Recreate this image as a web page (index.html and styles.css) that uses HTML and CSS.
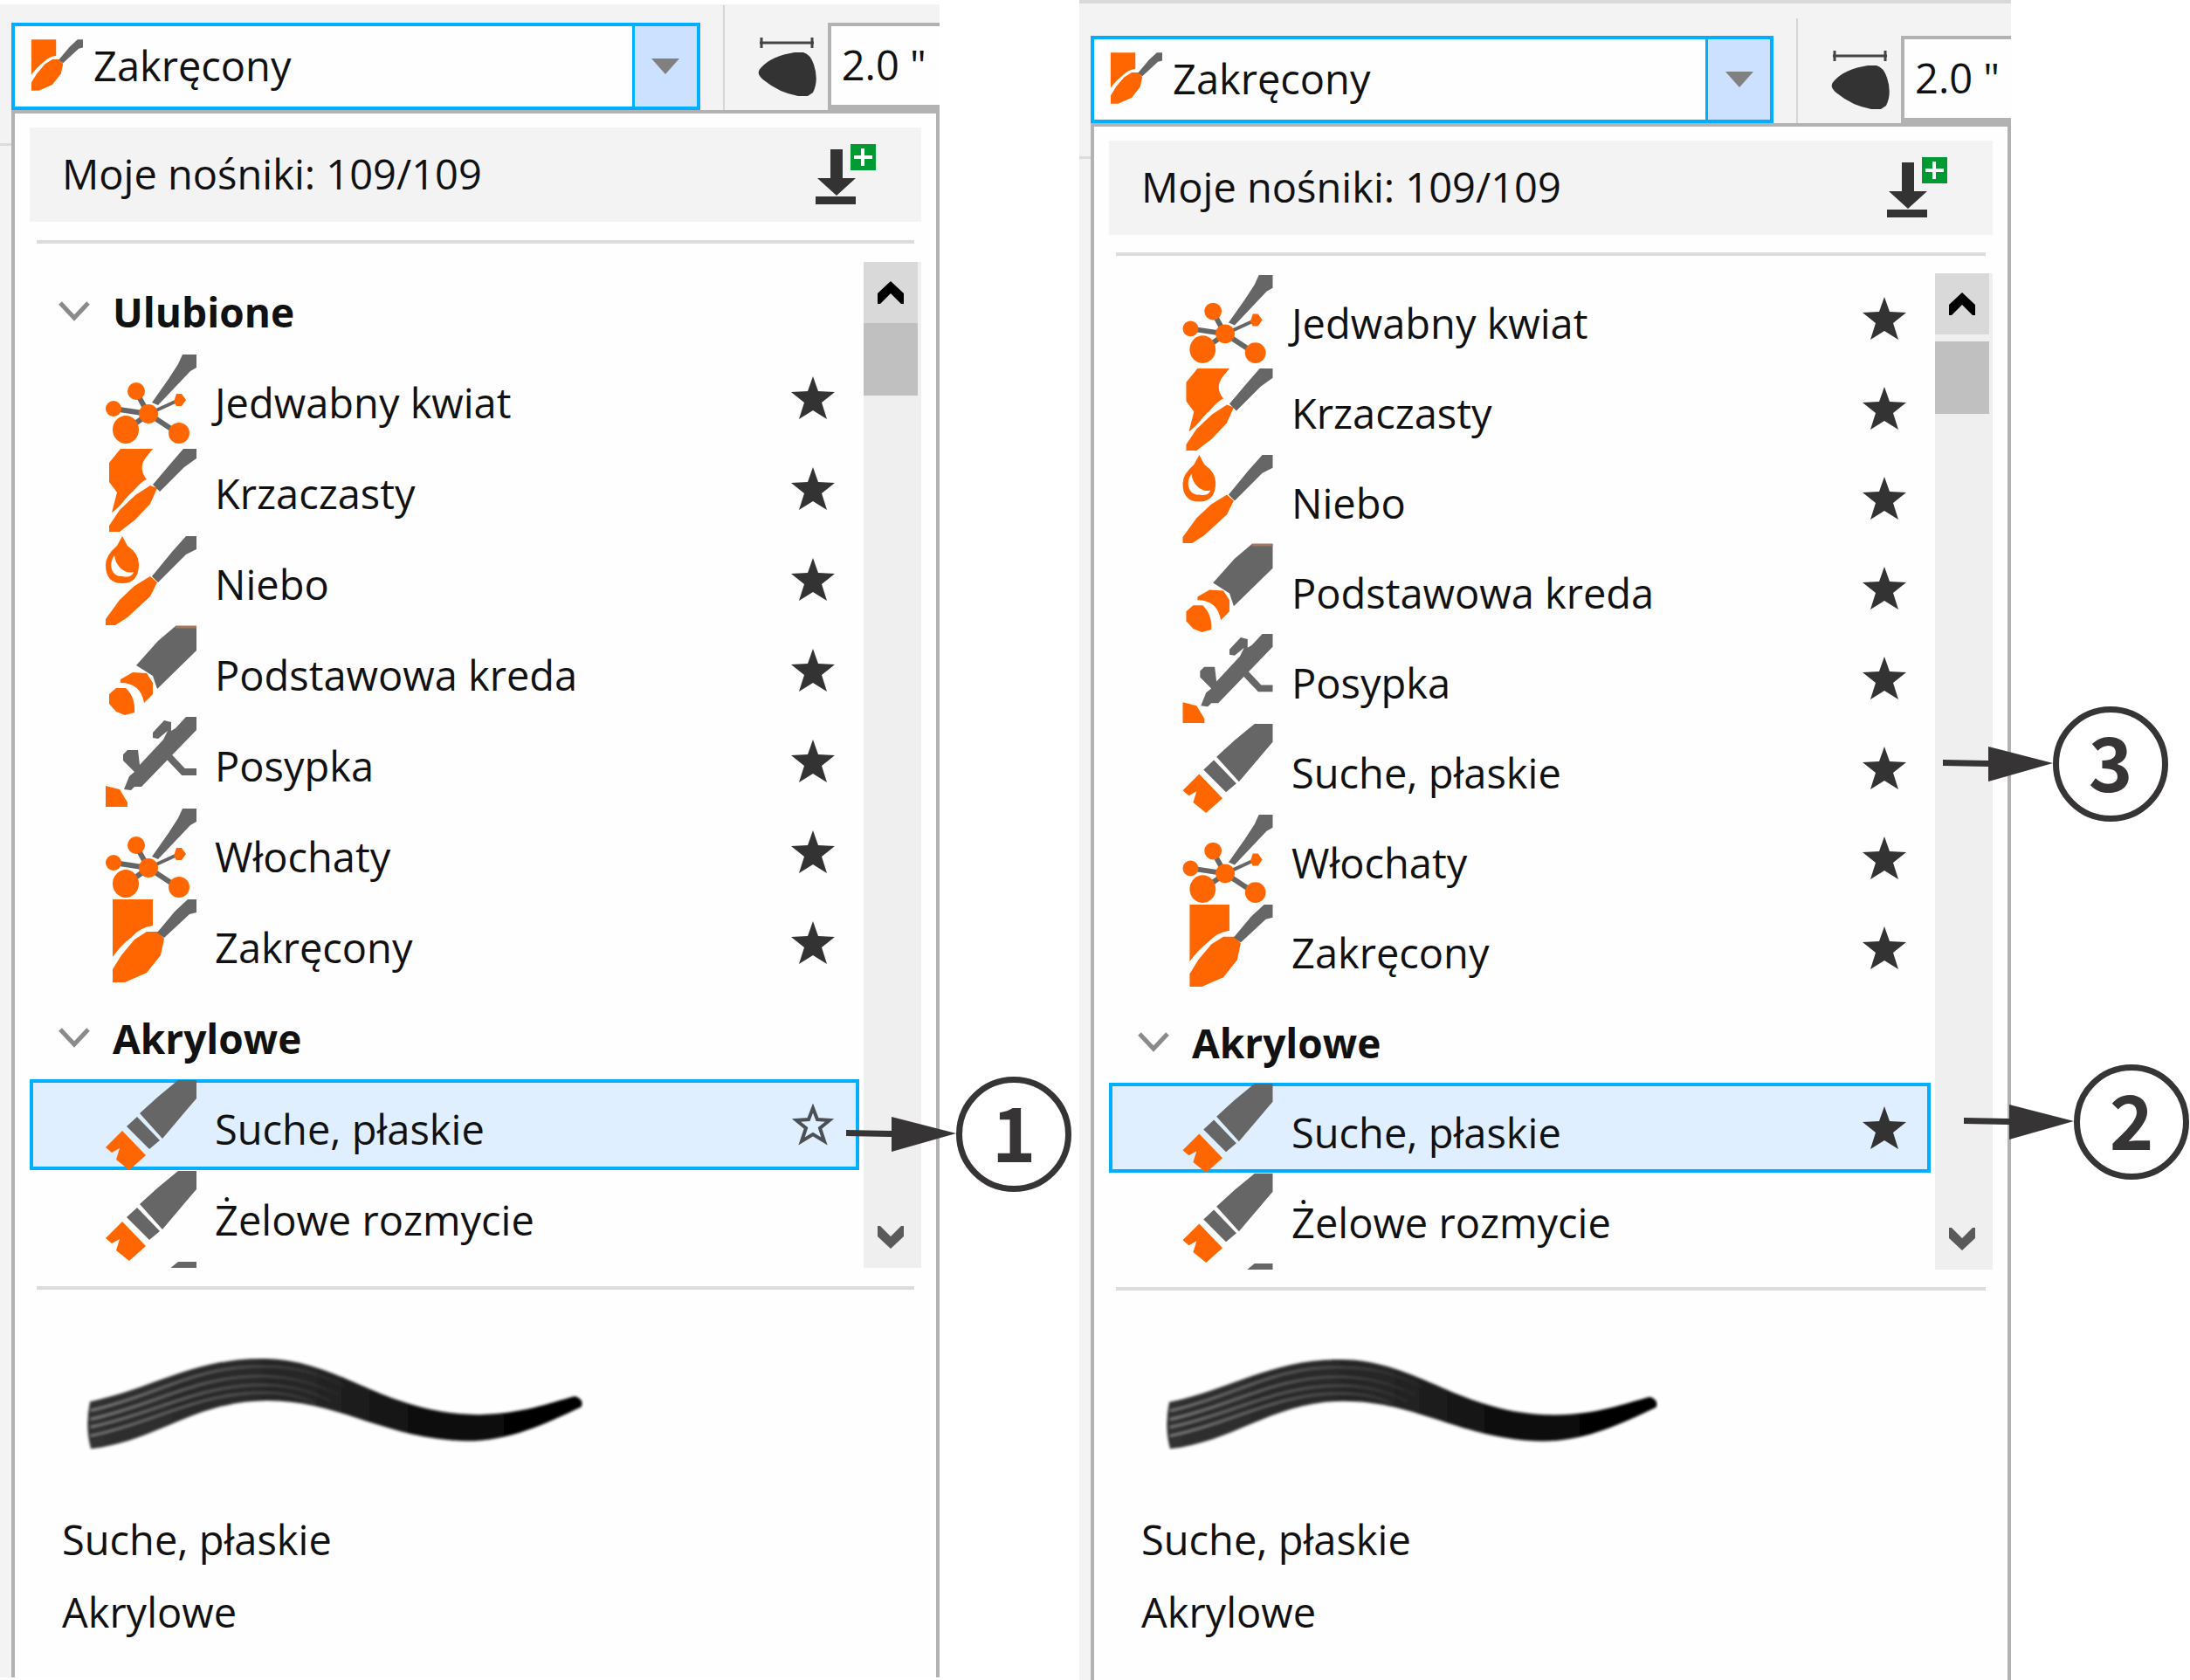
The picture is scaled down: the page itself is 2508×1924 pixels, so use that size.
FILE: index.html
```html
<!DOCTYPE html>
<html lang="pl">
<head>
<meta charset="utf-8">
<title>Nośniki artystyczne</title>
<link rel="stylesheet" href="styles.css">
</head>
<body>
<svg class="sprite" aria-hidden="true">
  <symbol id="flower" viewBox="0 0 104 104">
    <path d="M49 70L35 45M49 70L9 64M49 70L23 89M49 70L84 93" fill="none" stroke="#666" stroke-width="6"/>
    <path d="M49 70L84 54" fill="none" stroke="#666" stroke-width="4"/>
    <path d="M88 2H104V17L97 21L60 60L53 57L72 30L83 13Z" fill="#666"/>
    <g fill="#f60"><circle cx="35" cy="44" r="10"/><circle cx="9" cy="64" r="9"/><circle cx="49" cy="70" r="11"/><ellipse cx="23" cy="88" rx="15" ry="16"/><ellipse cx="84" cy="92" rx="12" ry="12"/><path d="M81 47h6l5 7-5 7h-6l-3-5z"/></g>
  </symbol>
  <symbol id="bush" viewBox="0 0 104 104">
    <path d="M17 6H54L46 16C40 24 40 32 47 41C40 44 36 50 31 55C22 62 18 72 7 79L13 56L4 44V22Z" fill="#f60"/>
    <path d="M51 48L59 51L51 69L34 87L16 101H4V94L16 76L34 59Z" fill="#f60"/>
    <path d="M89 6H104V17L90 27L62 55L54 47L76 21Z" fill="#666"/>
  </symbol>
  <symbol id="drop" viewBox="0 0 104 104">
    <path d="M19 2L25 13Q38 22 38 34Q38 56 19 56Q0 56 0 35Q0 24 13 13Z" fill="#f60"/>
    <path d="M10 24C2 36 8 49 19 48C28 50 31 46 32 43C22 46 11 36 10 24Z" fill="#fefefe"/>
    <path d="M51 48L59 55L51 71L25 95L11 104H0V97L16 75L33 59Z" fill="#f60"/>
    <path d="M92 2H104V17L92 23L60 55L53 48L76 20Z" fill="#666"/>
  </symbol>
  <symbol id="chalk" viewBox="0 0 104 104">
    <path d="M80 1H104V29L59 73L54 58L35 46L60 18Z" fill="#666"/>
    <path d="M80 2H104" stroke="#a67860" stroke-width="3"/>
    <path d="M17 62L31 54L47 55L54 66V79L44 89Q40 66 17 66Z" fill="#f60"/>
    <path d="M12 72H23Q34 82 33 100L22 103L12 99L4 90V79Z" fill="#f60"/>
  </symbol>
  <symbol id="spray" viewBox="0 0 104 104">
    <path d="M92 1H104V16L41 81H33L29 85L21 84L27 69L33 64L20 51V44L25 39H37L39 56L66 27L71 17L60 26L54 25V19L67 5L75 7V17L80 14Z" fill="#666"/>
    <path d="M70 44L89 64H104" fill="none" stroke="#666" stroke-width="8"/>
    <path d="M0 80L16 84L25 99V104H0Z" fill="#f60"/>
  </symbol>
  <symbol id="twist" viewBox="0 0 104 104">
    <path d="M8 2H54V32Q40 34 31 44Q16 56 8 68Z" fill="#f60"/>
    <path d="M47 39H60L67 47L63 66L47 86L22 97H8V82L18 66L33 48Z" fill="#f60"/>
    <path d="M94 2H104V17L96 19L67 46L59 40L79 16Z" fill="#666"/>
  </symbol>
  <symbol id="flat" viewBox="0 0 104 104">
    <path d="M83 1H104V22L92 36L65 68L39 39L60 20Z" fill="#666"/>
    <path d="M36 43L62 70L50 80L24 54Z" fill="#666"/>
    <path d="M19 59L46 87L27 104L12 92L16 79L7 84L0 78Z" fill="#f60"/>
  </symbol>
  <symbol id="star" viewBox="0 0 50 50"><path d="M25 0L31 17L50 18L35 30L41 49L25 39L9 49L15 30L0 18L19 17Z" fill="#333"/></symbol>
  <symbol id="star-off" viewBox="0 0 50 50"><path d="M25 6L30 19L44 20L33 29L38 44L25 36L12 44L17 29L6 20L20 19Z" fill="none" stroke="#4c4f53" stroke-width="4"/></symbol>
  <symbol id="chevron" viewBox="0 0 36 24"><path d="M2 2L18 19L34 2" fill="none" stroke="#8a8a8a" stroke-width="5"/></symbol>
  <symbol id="up" viewBox="0 0 30 26"><path d="M15 0L30 14V26H27L15 14L3 26H0V14Z"/></symbol>
  <symbol id="down" viewBox="0 0 30 26"><path d="M15 26L30 12V0H27L15 12L3 0H0V12Z" fill="#5a5a5a"/></symbol>
  <symbol id="tri" viewBox="0 0 32 18"><path d="M0 0H32L16 18Z" fill="#808080"/></symbol>
  <symbol id="nib" viewBox="0 0 68 70">
    <path d="M2 7H64M4 1V13M62 1V13" fill="none" stroke="#444" stroke-width="3"/>
    <path d="M42 18H52Q60 20 64 32Q70 50 63 64L57 68H46Q24 64 7 50Q-4 42 4 35Q16 22 42 18Z" fill="#333"/>
  </symbol>
  <symbol id="import" viewBox="0 0 70 70">
    <path d="M17 6H31V39H46L24 59L2 39H17ZM0 60H46V69H0Z" fill="#333"/>
    <path d="M40 0H69V30H40Z" fill="#009a33"/><path d="M54 5V25M44 15H65" stroke="#fff" stroke-width="4"/>
  </symbol>
  <symbol id="arrow" viewBox="0 0 126 40"><path d="M0 15L52 16V0L126 19L52 40V23L0 22Z" fill="#363435"/></symbol>
  <symbol id="stroke" viewBox="0 0 569 108">
    <defs>
      <linearGradient id="ink"><stop offset="0" stop-color="#303030"/><stop offset=".45" stop-color="#262626"/><stop offset=".7" stop-color="#0c0c0c"/><stop offset="1" stop-color="#000"/></linearGradient>
      <linearGradient id="bristle" gradientUnits="userSpaceOnUse" x1="0" y1="0" x2="300" y2="0"><stop offset="0" stop-color="#8a8a8a"/><stop offset=".6" stop-color="#555"/><stop offset="1" stop-color="#262626"/></linearGradient>
      <filter id="soft"><feGaussianBlur stdDeviation="1.4"/></filter>
    </defs>
    <g filter="url(#soft)">
      <path d="M5 52C75 38 124 2 204 3C292 4 340 66 449 67C500 66 528 54 559 46Q570 50 566 58C524 78 484 97 435 97C340 95 290 50 204 51C124 52 80 98 6 106Q-1 80 5 52Z" fill="url(#ink)"/>
      <path d="M6 62C80 46 126 10 204 12C240 12 266 20 296 34M6 72C80 56 126 22 204 23C240 24 262 32 290 44M6 81C80 66 126 33 204 33C236 34 258 40 280 52M6 91C80 76 126 42 204 42C226 42 246 46 262 54" fill="none" stroke="url(#bristle)" stroke-width="2"/>
    </g>
  </symbol>
</svg>

<main class="page">
  <section class="panel first">
    <div class="toolbar">
      <div class="combo">
        <svg class="combo-icon"><use href="#twist"/></svg>
        <select aria-label="Nośnik"><option>Zakręcony</option></select>
        <button class="combo-arrow" aria-label="Rozwiń"><svg><use href="#tri"/></svg></button>
      </div>
      <span class="separator"></span>
      <label class="nib" for="size-1"><svg role="img" aria-label="Rozmiar"><use href="#nib"/></svg></label>
      <input class="size" id="size-1" type="text" value='2.0 "'>
    </div>
    <div class="body">
      <span class="edge"></span>
      <div class="dropdown">
        <header class="head"><span>Moje nośniki: 109/109</span><button aria-label="Importuj"><svg><use href="#import"/></svg></button></header>
        <hr>
        <div class="scroller">
          <ul class="list">
            <li class="group"><button><svg><use href="#chevron"/></svg>Ulubione</button></li>
            <li><svg class="icon"><use href="#flower"/></svg><span>Jedwabny kwiat</span><button class="fav" aria-label="Ulubione"><svg><use href="#star"/></svg></button></li>
            <li><svg class="icon"><use href="#bush"/></svg><span>Krzaczasty</span><button class="fav" aria-label="Ulubione"><svg><use href="#star"/></svg></button></li>
            <li><svg class="icon"><use href="#drop"/></svg><span>Niebo</span><button class="fav" aria-label="Ulubione"><svg><use href="#star"/></svg></button></li>
            <li><svg class="icon"><use href="#chalk"/></svg><span>Podstawowa kreda</span><button class="fav" aria-label="Ulubione"><svg><use href="#star"/></svg></button></li>
            <li><svg class="icon"><use href="#spray"/></svg><span>Posypka</span><button class="fav" aria-label="Ulubione"><svg><use href="#star"/></svg></button></li>
            <li><svg class="icon"><use href="#flower"/></svg><span>Włochaty</span><button class="fav" aria-label="Ulubione"><svg><use href="#star"/></svg></button></li>
            <li><svg class="icon"><use href="#twist"/></svg><span>Zakręcony</span><button class="fav" aria-label="Ulubione"><svg><use href="#star"/></svg></button></li>
            <li class="group"><button><svg><use href="#chevron"/></svg>Akrylowe</button></li>
            <li class="selected"><svg class="icon"><use href="#flat"/></svg><span>Suche, płaskie</span><button class="fav" aria-label="Dodaj do ulubionych"><svg><use href="#star-off"/></svg></button></li>
            <li><svg class="icon"><use href="#flat"/></svg><span>Żelowe rozmycie</span></li>
            <li><svg class="icon"><use href="#flat"/></svg></li>
          </ul>
          <div class="scrollbar">
            <button class="scroll-up" aria-label="W górę"><svg><use href="#up"/></svg></button>
            <span class="thumb"></span>
            <button class="scroll-down" aria-label="W dół"><svg><use href="#down"/></svg></button>
          </div>
        </div>
        <hr>
        <div class="preview">
          <svg viewBox="0 0 569 108"><use href="#stroke"/></svg>
          <p>Suche, płaskie</p>
          <p>Akrylowe</p>
        </div>
      </div>
    </div>
    <div class="callout one"><svg><use href="#arrow"/></svg><span>1</span></div>
  </section>

  <section class="panel second">
    <div class="toolbar">
      <div class="combo">
        <svg class="combo-icon"><use href="#twist"/></svg>
        <select aria-label="Nośnik"><option>Zakręcony</option></select>
        <button class="combo-arrow" aria-label="Rozwiń"><svg><use href="#tri"/></svg></button>
      </div>
      <span class="separator"></span>
      <label class="nib" for="size-2"><svg role="img" aria-label="Rozmiar"><use href="#nib"/></svg></label>
      <input class="size" id="size-2" type="text" value='2.0 "'>
    </div>
    <div class="body">
      <span class="edge"></span>
      <div class="dropdown">
        <header class="head"><span>Moje nośniki: 109/109</span><button aria-label="Importuj"><svg><use href="#import"/></svg></button></header>
        <hr>
        <div class="scroller">
          <ul class="list">
            <li><svg class="icon"><use href="#flower"/></svg><span>Jedwabny kwiat</span><button class="fav" aria-label="Ulubione"><svg><use href="#star"/></svg></button></li>
            <li><svg class="icon"><use href="#bush"/></svg><span>Krzaczasty</span><button class="fav" aria-label="Ulubione"><svg><use href="#star"/></svg></button></li>
            <li><svg class="icon"><use href="#drop"/></svg><span>Niebo</span><button class="fav" aria-label="Ulubione"><svg><use href="#star"/></svg></button></li>
            <li><svg class="icon"><use href="#chalk"/></svg><span>Podstawowa kreda</span><button class="fav" aria-label="Ulubione"><svg><use href="#star"/></svg></button></li>
            <li><svg class="icon"><use href="#spray"/></svg><span>Posypka</span><button class="fav" aria-label="Ulubione"><svg><use href="#star"/></svg></button></li>
            <li><svg class="icon"><use href="#flat"/></svg><span>Suche, płaskie</span><button class="fav" aria-label="Ulubione"><svg><use href="#star"/></svg></button></li>
            <li><svg class="icon"><use href="#flower"/></svg><span>Włochaty</span><button class="fav" aria-label="Ulubione"><svg><use href="#star"/></svg></button></li>
            <li><svg class="icon"><use href="#twist"/></svg><span>Zakręcony</span><button class="fav" aria-label="Ulubione"><svg><use href="#star"/></svg></button></li>
            <li class="group"><button><svg><use href="#chevron"/></svg>Akrylowe</button></li>
            <li class="selected"><svg class="icon"><use href="#flat"/></svg><span>Suche, płaskie</span><button class="fav" aria-label="Ulubione"><svg><use href="#star"/></svg></button></li>
            <li><svg class="icon"><use href="#flat"/></svg><span>Żelowe rozmycie</span></li>
            <li><svg class="icon"><use href="#flat"/></svg></li>
          </ul>
          <div class="scrollbar">
            <button class="scroll-up" aria-label="W górę"><svg><use href="#up"/></svg></button>
            <span class="thumb"></span>
            <button class="scroll-down" aria-label="W dół"><svg><use href="#down"/></svg></button>
          </div>
        </div>
        <hr>
        <div class="preview">
          <svg viewBox="0 0 569 108"><use href="#stroke"/></svg>
          <p>Suche, płaskie</p>
          <p>Akrylowe</p>
        </div>
      </div>
    </div>
    <div class="callout three"><svg><use href="#arrow"/></svg><span>3</span></div>
    <div class="callout two"><svg><use href="#arrow"/></svg><span>2</span></div>
  </section>
</main>
</body>
</html>
```
FILE: styles.css
```css
* { box-sizing: border-box; }

body {
  margin: 0;
  background: #fff;
  color: #111;
  font: 47px/64px "Open Sans", "Noto Sans", sans-serif;
}

svg { display: block; }
.sprite { position: absolute; width: 0; height: 0; }
button, input, select { font: inherit; color: inherit; border: 0; padding: 0; margin: 0; background: none; border-radius: 0; }
p, ul { margin: 0; padding: 0; list-style: none; }

.page {
  display: grid;
  grid-template-columns: 1076fr 1067fr;
  column-gap: 160px;
  padding-right: 205px;
  min-height: 100vh;
}

.panel {
  --row: 104px;
  --gap: 21px;
  --indent: 87px;
  --preview-top: 76px;
  --thumb-gap: 0px;
  position: relative;
  display: flex;
  flex-direction: column;
  min-width: 0;
  background: #f3f3f3;
}
.first { margin-top: 5px; margin-bottom: 3px; }
.second {
  --row: 103px;
  --gap: 20px;
  --indent: 84px;
  --preview-top: 76px;
  --thumb-gap: 8px;
  border-top: 4px solid #d9d9d9;
}

/* toolbar */
.toolbar { display: flex; align-items: stretch; height: 121px; padding: 21px 0 0 13px; }
.second .toolbar { height: 137px; padding-top: 37px; }
.combo { display: flex; align-items: center; flex: 0 0 74.2%; border: 4px solid #00aeff; background: #fefefe; }
.combo-icon { width: 64px; height: 64px; margin-left: 14px; }
.combo select { flex: 1; min-width: 0; height: 100%; padding: 0 0 2px 12px; appearance: none; }
.combo-arrow { display: grid; place-items: center; width: 74px; height: 100%; border-left: 3px solid #00aeff; background: #cce0ff; }
.combo-arrow svg { width: 32px; height: 18px; }
.separator { width: 2px; margin: -20px 38px 0 26px; background: #d6d6d6; }
.nib { width: 68px; margin-right: 12px; padding-top: 16px; }
.nib svg { width: 68px; height: 70px; }
.size { flex: 1; min-width: 0; padding: 0 0 2px 12px; border: 4px solid #b2b2b2; border-right: 0; border-bottom-width: 6px; background: #fefefe; }

/* dropdown */
.body { display: flex; flex: 1; }
.edge { flex: none; width: 13px; height: 41px; border-bottom: 3px solid #dcdcdc; }
.dropdown { flex: 1; min-width: 0; border: 4px solid #b2b2b2; border-bottom: 0; background: #fefefe; }
.head { display: flex; align-items: center; justify-content: space-between; height: 108px; margin: 16px 17px 0; padding: 0 51px 0 37px; background: #f3f3f3; }
.head span { padding-bottom: 3px; }
.head button, .head svg { width: 70px; height: 70px; }
hr { height: 4px; margin: var(--gap) 25px; border: 0; background: #dcdcdc; }

.scroller { display: flex; gap: 5px; height: calc(var(--row) * 11 + 8px); margin: 0 17px; }
.list { flex: 1; min-width: 0; overflow: hidden; }
.list li { display: flex; align-items: center; height: var(--row); padding: 0 28px 0 var(--indent); }
.list li span { flex: 1; padding: 10px 0 0 21px; }
.icon { width: 104px; height: var(--row); }
.fav, .fav svg { width: 50px; height: 50px; }
.list .group { padding: 10px 0 0 33px; }
.group button { display: flex; align-items: center; gap: 26px; font-size: 46px; font-weight: 700; }
.group svg { width: 36px; height: 24px; }
.selected { background: #dfefff; box-shadow: inset 0 0 0 4px #00aeff; }

.scrollbar { display: flex; flex-direction: column; width: 66px; background: #efefef; }
.scrollbar button { display: grid; place-items: center; width: 62px; height: 70px; }
.scrollbar svg { width: 30px; height: 26px; }
.scroll-up { background: #d9d9d9; }
.thumb { width: 62px; height: 83px; margin-top: var(--thumb-gap); background: #c0c0c0; }
.scroll-down { margin-top: auto; }

.preview { padding: calc(var(--preview-top) - var(--gap)) 0 0 37px; margin-left: 17px; }
.preview svg { width: 57%; margin: 0 0 61px 27px; }
.preview p { line-height: 83px; }

/* numbered callouts */
.callout { position: absolute; display: flex; align-items: center; width: 258px; color: #363435; }
.callout svg { flex: none; width: 126px; height: 40px; }
.callout span { flex: none; display: grid; place-items: center; width: 132px; height: 132px; padding-bottom: 10px; border: 7px solid; border-radius: 50%; font: 700 86px/100px "Noto Sans CJK SC", sans-serif; }
.one { right: -151px; top: 1228px; }
.three { right: -180px; top: 805px; }
.two { right: -204px; top: 1215px; }
```
